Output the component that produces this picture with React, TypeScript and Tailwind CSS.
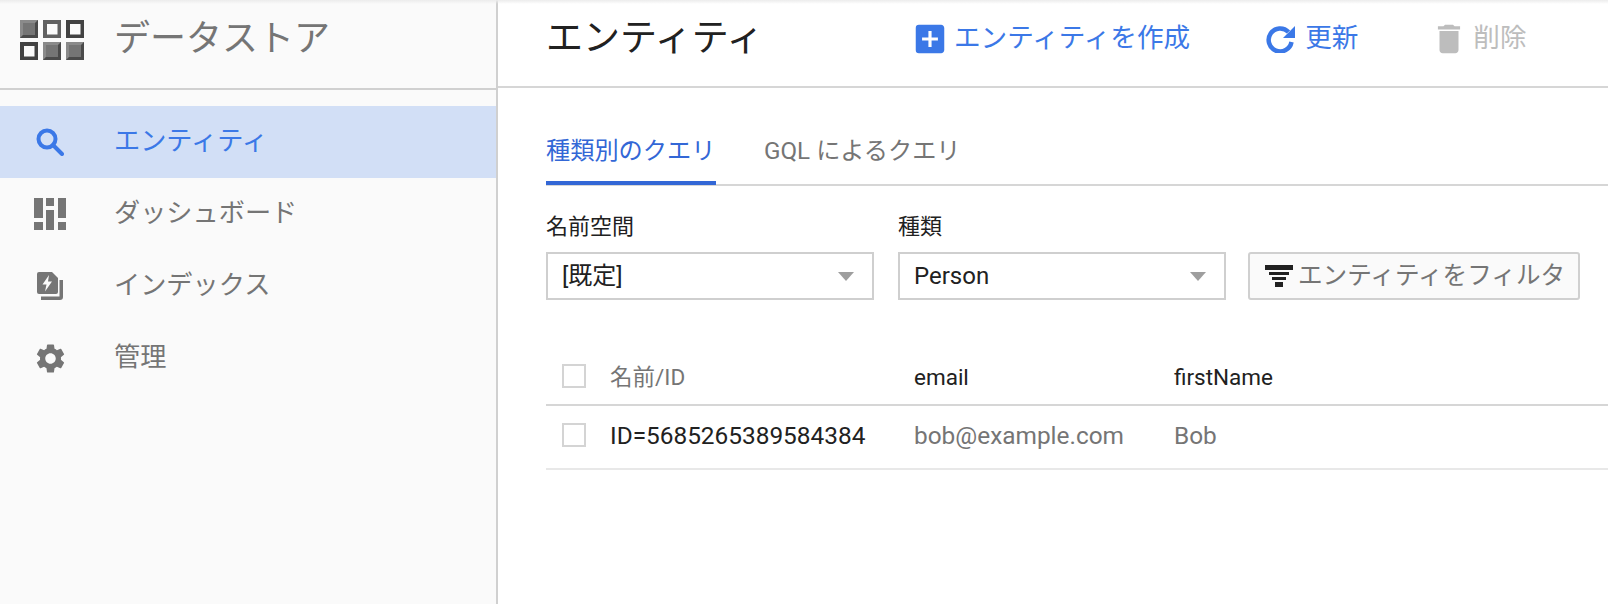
import { MdAddBox, MdDelete, MdSettings } from "react-icons/md";

const font = { fontFamily: "Roboto, 'Noto Sans CJK JP', sans-serif" };

function Cell({ filled, dark }: { filled?: boolean; dark?: boolean }) {
  if (filled) {
    return (
      <svg width="18" height="18" viewBox="0 0 18 18">
        <rect width="18" height="18" fill="#757575" />
        <path d="M0 0H18L15 3H3V15L0 18Z" fill="#8a8a8a" />
        <path d="M0 18H18V0L15 3V15H3Z" fill="#4a4a4a" />
      </svg>
    );
  }
  return (
    <svg width="18" height="18" viewBox="0 0 18 18">
      <rect width="18" height="18" fill={dark ? "#424242" : "#616161"} />
      <rect x="4" y="4" width="10.5" height="10.5" fill="#fafafa" />
    </svg>
  );
}

function Logo() {
  return (
    <div className="grid grid-cols-[18px_18px_18px] grid-rows-[18px_18px] gap-x-[5px] gap-y-[4px]">
      <Cell filled />
      <Cell />
      <Cell dark />
      <Cell dark />
      <Cell filled />
      <Cell filled />
    </div>
  );
}

function SearchIcon() {
  return (
    <svg width="28" height="28" viewBox="0 0 28 28" fill="none" stroke="currentColor" strokeWidth="4">
      <circle cx="11" cy="11" r="8.5" />
      <path d="M17 17L26 26" strokeLinecap="round" />
    </svg>
  );
}

function RefreshIcon() {
  return (
    <svg width="29" height="28" viewBox="0 0 29 28" fill="none">
      <path d="M22.5 7A11.5 11.5 0 1 0 25.5 17" stroke="currentColor" strokeWidth="4.5" />
      <path d="M29 1V13H17Z" fill="currentColor" />
    </svg>
  );
}

function DashIcon() {
  return (
    <svg width="32" height="32" viewBox="0 0 32 32" fill="#757575">
      <rect x="0" y="0" width="9" height="20" />
      <rect x="0" y="24" width="9" height="8" />
      <rect x="12" y="0" width="8" height="8" />
      <rect x="12" y="12" width="8" height="20" />
      <rect x="24" y="0" width="8" height="20" />
      <rect x="24" y="24" width="8" height="8" />
    </svg>
  );
}

function IndexIcon() {
  return (
    <svg width="26" height="28" viewBox="0 0 26 28">
      <path d="M2 0H15L21 6V20A2 2 0 0 1 19 22H2A2 2 0 0 1 0 20V2A2 2 0 0 1 2 0Z" fill="#757575" />
      <path d="M22.5 8H26V25A3 3 0 0 1 23 28H4V24.5H22.5Z" fill="#757575" />
      <path d="M12 3L5.5 12.5H9.5L8 19.5L15 9.5H11Z" fill="#fafafa" />
    </svg>
  );
}

function FilterIcon() {
  return (
    <svg width="28" height="22" viewBox="0 0 28 22" fill="#212121">
      <rect x="0" y="0" width="28" height="5" />
      <rect x="4" y="7" width="20" height="3" />
      <rect x="7" y="12" width="14" height="3" />
      <rect x="10" y="17" width="8" height="5" />
    </svg>
  );
}

function Caret() {
  return <div className="h-0 w-0 border-x-[8px] border-t-[9px] border-x-transparent border-t-[#9e9e9e]" />;
}

function NavRow({ icon, label, active }: { icon: React.ReactNode; label: string; active?: boolean }) {
  return (
    <div className={`flex h-[72px] items-center ${active ? "bg-[#d2dff6] text-[#3b78e7]" : "text-[#757575]"}`}>
      <div className="flex w-[114px] justify-center pr-[14px]">{icon}</div>
      <span className="pb-[2px] text-[26.2px] leading-none">{label}</span>
    </div>
  );
}

function Select({ label, value, w }: { label: string; value: string; w: string }) {
  return (
    <div className={`flex flex-col ${w}`}>
      <div className="h-[42px] text-[22px] leading-[34px] text-[#212121]">{label}</div>
      <div className="flex h-[48px] items-center justify-between border-2 border-[#cfcfcf] pl-[14px] pr-[18px] text-[24px] text-[#212121]">
        <span>{value}</span>
        <Caret />
      </div>
    </div>
  );
}

function Check() {
  return <div className="h-[24px] w-[24px] border-2 border-[#d4d4d4]" />;
}

export default function App() {
  return (
    <div className="relative flex h-[604px] w-[1608px] overflow-hidden bg-white" style={font}>
      <div className="absolute inset-x-0 top-0 h-[4px] bg-gradient-to-b from-[#ececec] to-transparent" />
      <aside className="w-[498px] shrink-0 border-r-2 border-[#d0d0d0] bg-[#fafafa]">
        <div className="flex h-[90px] items-start border-b-2 border-[#d0d0d0] pl-[20px] pt-[20px]">
          <Logo />
          <span className="ml-[30px] pt-[1px] text-[36px] leading-[36px] text-[#757575]">データストア</span>
        </div>
        <nav className="pt-[16px]">
          <NavRow active icon={<SearchIcon />} label="エンティティ" />
          <NavRow icon={<DashIcon />} label="ダッシュボード" />
          <NavRow icon={<IndexIcon />} label="インデックス" />
          <NavRow icon={<MdSettings size={35} />} label="管理" />
        </nav>
      </aside>
      <main className="min-w-0 flex-1">
        <div className="flex h-[88px] items-center border-b-2 border-[#d6d6d6] pb-[9px] pl-[48px]">
          <h1 className="w-[369px] text-[37px] font-normal leading-none text-[#212121]">エンティティ</h1>
          <div className="flex items-center gap-[9px] text-[#3b78e7]">
            <MdAddBox size={38} className="-mx-[4px]" />
            <span className="text-[26.6px] leading-none">エンティティを作成</span>
          </div>
          <div className="ml-[76px] flex items-center gap-[10px] text-[#3b78e7]">
            <RefreshIcon />
            <span className="text-[26.6px] leading-none">更新</span>
          </div>
          <div className="ml-[76px] flex items-center gap-[9px] text-[#bdbdbd]">
            <MdDelete size={38} className="-mx-[4px]" />
            <span className="text-[26.6px] leading-none">削除</span>
          </div>
        </div>
        <div className="pl-[48px]">
          <div className="flex h-[98px] items-end border-b-2 border-[#d6d6d6]">
            <div className="-mb-[1px] h-[53px] w-[170px] border-b-4 border-[#3367d6] text-[24.2px] leading-[39px] text-[#3367d6]">種類別のクエリ</div>
            <div className="-mb-[1px] ml-[48px] h-[53px] text-[24.2px] leading-[39px] text-[#757575]">GQL によるクエリ</div>
          </div>
          <div className="mt-[24px] flex items-end">
            <Select label="名前空間" value="[既定]" w="w-[328px]" />
            <div className="w-[24px]" />
            <Select label="種類" value="Person" w="w-[328px]" />
            <div className="ml-[22px] flex h-[48px] w-[332px] items-center gap-[5px] rounded-[3px] border-2 border-[#d0d0d0] bg-[#fafafa] pl-[15px] text-[24.6px] text-[#757575]">
              <FilterIcon />
              <span>エンティティをフィルタ</span>
            </div>
          </div>
          <div className="mt-[47px]">
            <div className="flex h-[59px] items-center border-b-2 border-[#d6d6d6] text-[22.5px]">
              <div className="w-[64px] pl-[16px]"><Check /></div>
              <div className="w-[304px] pt-[5px] text-[#757575]">名前/ID</div>
              <div className="w-[260px] pt-[5px] text-[#212121]">email</div>
              <div className="pt-[5px] text-[#212121]">firstName</div>
            </div>
            <div className="flex h-[64px] items-center border-b-2 border-[#e8e8e8] text-[24.4px] text-[#757575]">
              <div className="w-[64px] pb-[4px] pl-[16px]"><Check /></div>
              <div className="w-[304px] pb-[2px] text-[#212121]">ID=5685265389584384</div>
              <div className="w-[260px] pb-[2px]">bob@example.com</div>
              <div className="pb-[2px]">Bob</div>
            </div>
          </div>
        </div>
      </main>
    </div>
  );
}
